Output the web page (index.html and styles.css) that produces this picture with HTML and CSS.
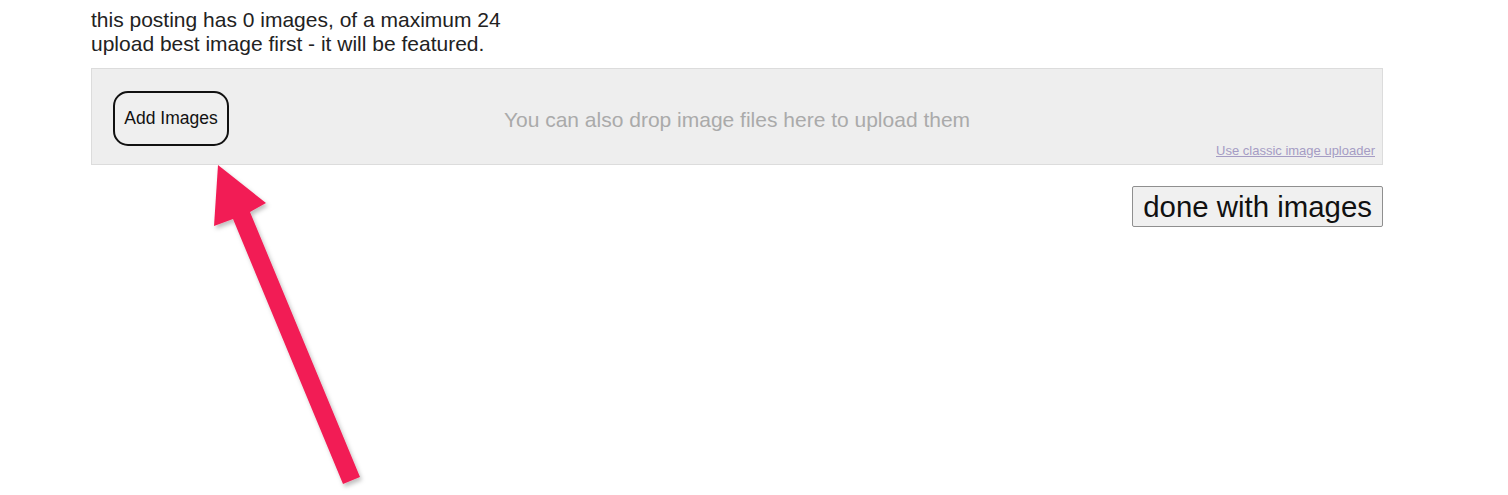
FILE: index.html
```html
<!DOCTYPE html>
<html>
<head>
<meta charset="utf-8">
<link rel="stylesheet" href="styles.css">
</head>
<body>
<div class="page">
  <div class="info">
    <div>this posting has 0 images, of a maximum 24</div>
    <div>upload best image first - it will be featured.</div>
  </div>
  <div class="dropzone">
    <button class="add-btn">Add Images</button>
    <div class="drop-text">You can also drop image files here to upload them</div>
    <a class="classic" href="#">Use classic image uploader</a>
  </div>
  <div class="done-row">
    <button class="done-btn">done with images</button>
  </div>
</div>
<svg class="arrow" width="1508" height="495" viewBox="0 0 1508 495">
  <defs>
    <filter id="sh" x="-20%" y="-20%" width="140%" height="140%">
      <feDropShadow dx="2" dy="3" stdDeviation="2" flood-color="#000" flood-opacity="0.25"/>
    </filter>
  </defs>
  <polygon filter="url(#sh)" fill="#f21f55" points="218,165 266,203 250,212 360,477 343,484 233,219 214,226"/>
</svg>
</body>
</html>
```
FILE: styles.css
```css
html, body {
  margin: 0;
  padding: 0;
  background: #fff;
}
body {
  font-family: "Liberation Sans", Arial, sans-serif;
  color: #222;
}
.page {
  width: 1292px;
  margin-left: 91px;
  padding-top: 8px;
}
.info {
  font-size: 21px;
  line-height: 24px;
  color: #222;
}
.dropzone {
  margin-top: 12px;
  height: 95px;
  background: #eeeeee;
  border: 1px solid #dcdcdc;
  display: flex;
  align-items: center;
  position: relative;
}
.add-btn {
  margin-left: 21px;
  margin-top: 3px;
  width: 116px;
  height: 55px;
  border: 2px solid #111;
  border-radius: 15px;
  background: #efefef;
  font-family: "Liberation Sans", Arial, sans-serif;
  font-size: 17.5px;
  color: #111;
  padding: 0;
}
.drop-text {
  flex: 1;
  text-align: center;
  font-size: 21px;
  color: #aaa;
  margin-right: 137px;
  margin-top: 6px;
}
.classic {
  position: absolute;
  right: 7px;
  bottom: 6px;
  font-size: 13px;
  color: #a59cc4;
  text-decoration: underline;
}
.done-row {
  display: flex;
  justify-content: flex-end;
  margin-top: 21px;
}
.done-btn {
  height: 41px;
  padding: 0 10px;
  font-family: "Liberation Sans", Arial, sans-serif;
  font-size: 29.4px;
  color: #111;
  background: #f0f0f0;
  border: 1px solid #8f8f8f;
  border-radius: 2px;
}
.arrow {
  position: absolute;
  left: 0;
  top: 0;
  pointer-events: none;
}
```
